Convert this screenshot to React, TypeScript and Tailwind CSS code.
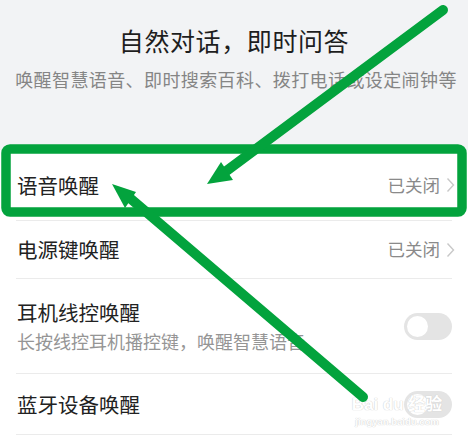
import React from "react";

const font = { fontFamily: '"Noto Sans CJK SC", "Noto Sans", sans-serif' };

function Chevron() {
  return (
    <svg width="9" height="16" viewBox="0 0 9 16" className="ml-[6px]">
      <polyline points="1.5,1.5 7.5,8 1.5,14.5" fill="none" stroke="#c8c8c8" strokeWidth="1.4" />
    </svg>
  );
}

function Toggle() {
  return (
    <div className="w-[48px] h-[27px] rounded-full bg-[#e4e4e4] flex items-center px-[3px]">
      <div className="w-[21px] h-[21px] rounded-full bg-white" />
    </div>
  );
}

export default function App() {
  return (
    <div className="relative w-[468px] h-[435px] overflow-hidden bg-white" style={font}>
      <div className="h-[150px] bg-[#f2f3f5] flex flex-col items-center">
        <div className="mt-[24px] text-[25px] leading-[32px] text-[#1e1e1e] tracking-[0.6px]">自然对话，即时问答</div>
        <div className="mt-[12px] ml-[4px] text-[18px] leading-[22px] text-[#858585] tracking-[0.4px]">唤醒智慧语音、即时搜索百科、拨打电话或设定闹钟等</div>
      </div>
      <div className="h-[70px] flex items-center justify-between pl-[17px] pr-[13px]">
        <span className="text-[20.5px] text-[#222]">语音唤醒</span>
        <span className="flex items-center text-[17.5px] text-[#8a8a8a]">已关闭<Chevron /></span>
      </div>
      <div className="mx-[16px] border-b border-[#ebebeb]" />
      <div className="h-[57px] flex items-center justify-between pl-[17px] pr-[13px]">
        <span className="text-[20.5px] text-[#222]">电源键唤醒</span>
        <span className="flex items-center text-[17.5px] text-[#8a8a8a]">已关闭<Chevron /></span>
      </div>
      <div className="mx-[16px] border-b border-[#ebebeb]" />
      <div className="h-[94px] flex items-center justify-between pl-[17px] pr-[16px]">
        <div className="flex flex-col">
          <span className="text-[20.5px] leading-[28px] text-[#222]">耳机线控唤醒</span>
          <span className="text-[18px] leading-[26px] mt-[2px] text-[#959595]">长按线控耳机播控键，唤醒智慧语音</span>
        </div>
        <Toggle />
      </div>
      <div className="mx-[16px] border-b border-[#ebebeb]" />
      <div className="h-[60px] flex items-center justify-between pl-[17px] pr-[16px]">
        <span className="text-[20.5px] text-[#222]">蓝牙设备唤醒</span>
        <Toggle />
      </div>
      <div className="mx-[16px] border-b border-[#ebebeb]" />

      <div className="absolute left-[352px] top-[395px] w-[90px] flex flex-col items-center">
        <div
          className="text-[17px] leading-[20px] font-bold text-white whitespace-nowrap"
          style={{ fontFamily: '"Liberation Sans", "Noto Sans CJK SC", sans-serif', textShadow: "0 0 1px #cfcfcf, 0 0 1px #cfcfcf" }}
        >
          Bai du 经验
        </div>
        <div
          className="text-[9.5px] leading-[13px] font-bold text-white whitespace-nowrap"
          style={{ fontFamily: '"Liberation Sans", sans-serif', textShadow: "0 0 1px #cfcfcf, 0 0 1px #cfcfcf" }}
        >
          jingyan.baidu.com
        </div>
      </div>

      <svg className="absolute left-0 top-0" width="468" height="435" viewBox="0 0 468 435">
        <rect x="6" y="149" width="456" height="63" rx="4" fill="none" stroke="#03a33d" strokeWidth="9.5" />
        <line x1="443" y1="10" x2="225" y2="172" stroke="#03a33d" strokeWidth="10" strokeLinecap="round" />
        <polygon points="207,184 221,162 233,180" fill="#03a33d" />
        <line x1="131" y1="199" x2="363" y2="397" stroke="#03a33d" strokeWidth="10" strokeLinecap="round" />
        <polygon points="112,184 136,192 125,208" fill="#03a33d" />
      </svg>
    </div>
  );
}
